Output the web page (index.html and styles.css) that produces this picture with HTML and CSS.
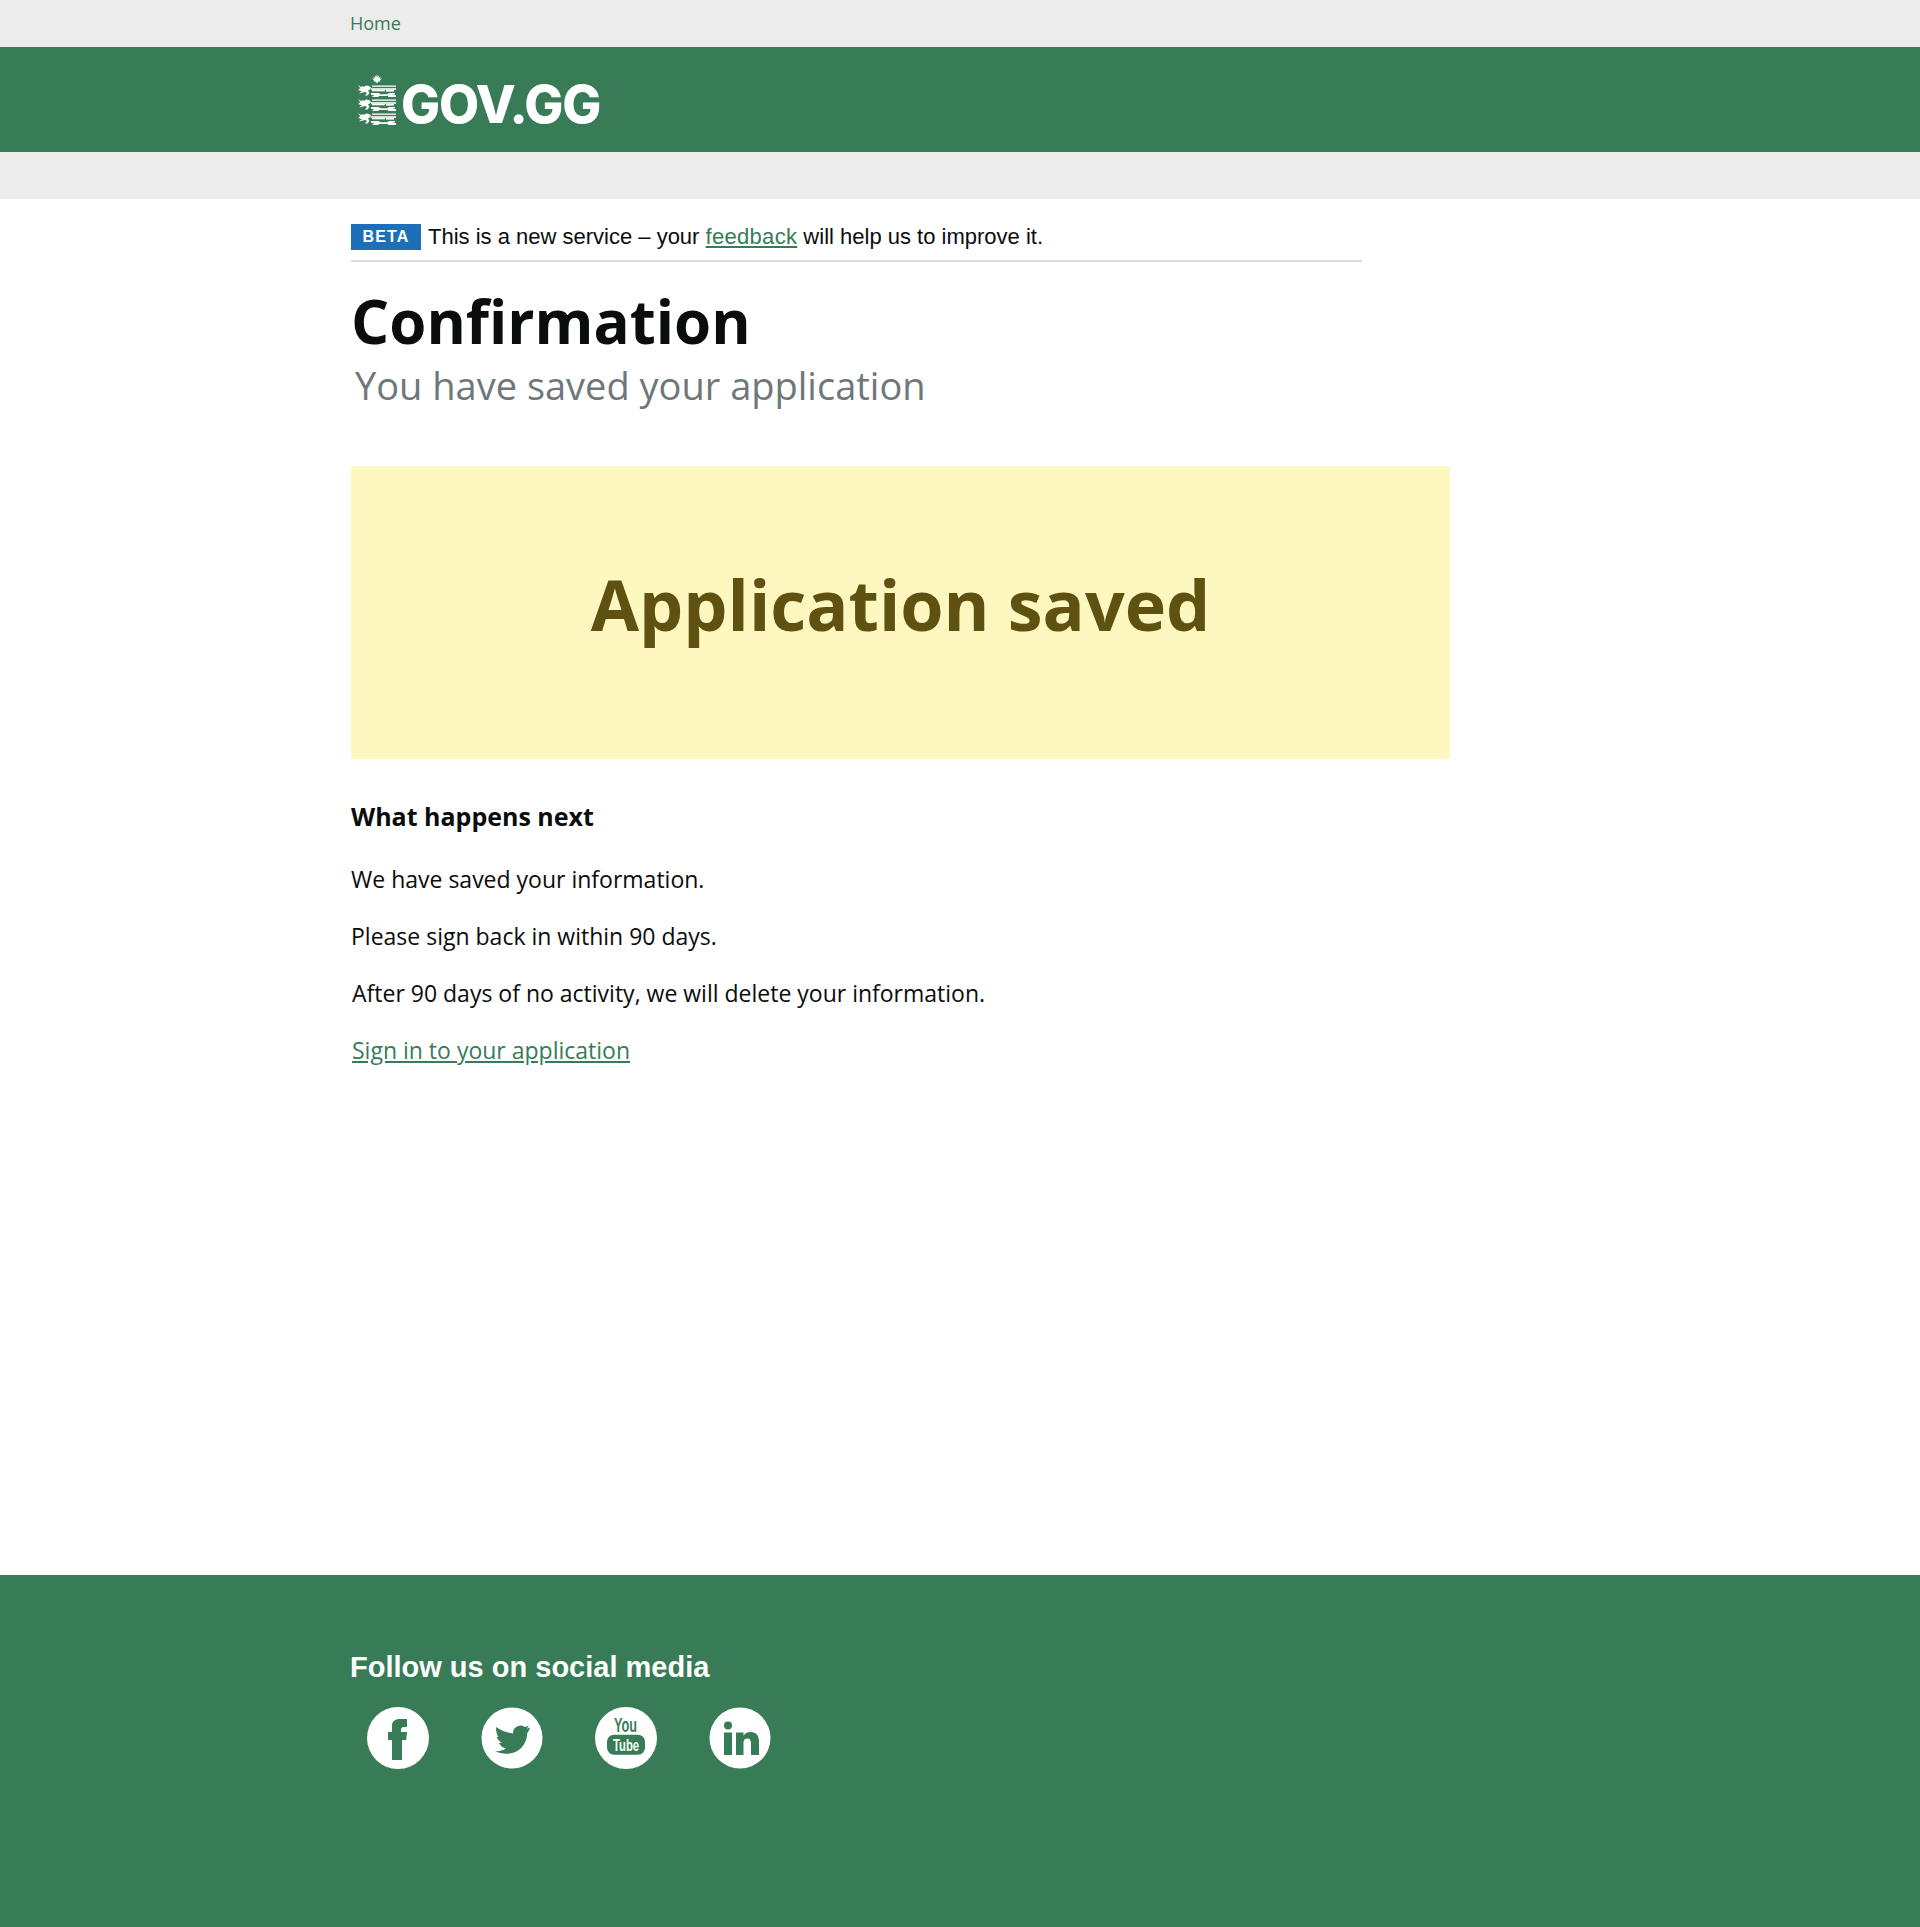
FILE: index.html
```html
<!DOCTYPE html>
<html lang="en">
<head>
<meta charset="utf-8">
<title>Confirmation - GOV.GG</title>
<link rel="stylesheet" href="styles.css">
</head>
<body>
<div class="topbar"><div class="wrap"><a class="home" href="#">Home</a></div></div>
<header class="masthead">
  <div class="wrap logo">
    <svg class="crest" width="40" height="54" viewBox="0 0 40 54" aria-hidden="true">
      <defs>
        <g id="lion">
          <path d="M1 0l3 2 2-1 1 1 2-1.500 3 .5 2 1.500-1 2-2 1 1.500 2.500-2 2.500H8l2-2.500-2-1-6 1.500 3-2.500L.5 6l3-.5L1 4l2.500-.5z"/>
          <rect x="15" y=".5" width="24" height="1.300"/>
          <rect x="14" y="3.200" width="25" height="1.600"/>
          <rect x="15" y="4.800" width="13" height="1.500"/>
          <path d="M14 8h8l1 1.200h7l2-1.200h6v1.200l-3 .8h4v2h-8v-1.500l-1 .5h-8l-1 1h-6l2-2h-3z"/>
          <rect x="29" y="5" width="8" height="1.600"/>
        </g>
      </defs>
      <g fill="#fff">
        <path d="M20 2l.7 3 1.500-2-.6 3 2.400-1.600-1.600 2.600 2.600-.7-2.500 2.400 1.500.3-3 .8-.5 1.200h-1l-.5-1.200-3-.8 1.500-.3-2.500-2.400 2.600.7-1.600-2.600 2.400 1.600-.6-3 1.500 2z"/>
        <use href="#lion" y="13"/>
        <use href="#lion" y="27"/>
        <use href="#lion" y="41"/>
      </g>
    </svg>
    <span class="logotext">GOV.GG</span>
  </div>
</header>
<div class="subbar"></div>
<main class="wrap content">
  <div class="phase"><strong class="tag">BETA</strong><span class="phase-text">This is a new service – your <a class="phase-link" href="#">feedback</a> will help us to improve it.</span></div>
  <h1 class="title">Confirmation</h1>
  <p class="subtitle">You have saved your application</p>
  <div class="panel"><h2 class="panel-title">Application saved</h2></div>
  <h3 class="next">What happens next</h3>
  <p class="para">We have saved your information.</p>
  <p class="para">Please sign back in within 90 days.</p>
  <p class="para para-in">After 90 days of no activity, we will delete your information.</p>
  <p class="para para-in"><a href="#">Sign in to your application</a></p>
</main>
<footer class="footer">
  <div class="wrap">
    <h4 class="follow">Follow us on social media</h4>
    <div class="social">
      <a href="#" class="soc" aria-label="Facebook"><svg width="62" height="62" viewBox="0 0 62 62"><circle cx="31" cy="31" r="31" fill="#fff"/><path class="ic" d="M25 53V33h-4v-8h4v-6c0-5 3-7 8-7h7v8h-3c-2 0-3 .8-3 3v2h6l-.8 8H35v20z"/></svg></a>
      <a href="#" class="soc" aria-label="Twitter"><svg width="62" height="62" viewBox="0 0 62 62"><circle cx="31" cy="31" r="30.500" fill="#fff"/><path class="ic" d="M49 20.500L45.500 21.700 48 18.500 44 20C42 18.300 39.500 18 37 19 33.500 20.500 31.800 23 32 26.500 26 25.500 20 23.500 15 20 15 24 15.500 27.500 17.500 30L15.500 30C17 33 18.500 34.500 21 35.500L18 36C19.500 39 22 41 25 41.500 22 43.500 18 44.500 14 44.300 20 47 27 47.500 33 45.500 41 42.500 46 35 46.300 26 47.500 24.500 48.500 22.500 49 20.500Z"/></svg></a>
      <a href="#" class="soc" aria-label="YouTube"><svg width="62" height="62" viewBox="0 0 62 62"><circle cx="31" cy="31" r="31" fill="#fff"/><text class="yt-you" x="30.500" y="25" text-anchor="middle" textLength="23" lengthAdjust="spacingAndGlyphs">You</text><rect x="12" y="27.700" width="38" height="20" rx="7" class="ic"/><text class="yt-tube" x="31" y="44" text-anchor="middle" textLength="26" lengthAdjust="spacingAndGlyphs">Tube</text></svg></a>
      <a href="#" class="soc" aria-label="LinkedIn"><svg width="62" height="62" viewBox="0 0 62 62"><circle cx="31" cy="31" r="30.500" fill="#fff"/><g class="ic"><circle cx="19" cy="18.500" r="4"/><rect x="15" y="25.500" width="8" height="22.500"/><path d="M27 25.500h7.500v3.200c1.200-2.200 3.700-3.800 7-3.800 6.400 0 8.500 4 8.500 10V48h-8V36.500c0-2.800-.8-5-3.700-5-3 0-3.800 2.200-3.800 5V48h-7.500z"/></g></svg></a>
    </div>
  </div>
</footer>
</body>
</html>
```
FILE: styles.css
```css
* { box-sizing: border-box; }
html, body { margin: 0; padding: 0; }
body {
  min-height: 1927px;
  display: flex;
  flex-direction: column;
  background: #fff;
  color: #0b0c0c;
  font-family: "Open Sans", sans-serif;
}
a { color: #387c57; }
.wrap { width: 1218px; margin-left: 351px; }
.topbar { height: 47px; background: #ececec; display: flex; align-items: center; }
.home { margin-left: -1px; font-size: 18px; line-height: 47px; text-decoration: none; }
.masthead { height: 105px; background: #387c57; }
.logo { display: flex; align-items: flex-start; height: 105px; padding: 25px 0 0 6px; }
.crest { flex: none; }
.logotext {
  margin: 9px 0 0 4px;
  color: #fff;
  font-family: Inter, sans-serif;
  font-weight: 800;
  font-size: 52px;
  line-height: 48px;
  letter-spacing: -1.200px;
}
.subbar { height: 47px; background: #ececec; }
.content { flex: 1 0 auto; }
.phase {
  width: 1011px;
  height: 63px;
  padding-top: 25px;
  border-bottom: 2px solid #dddddd;
  display: flex;
  align-items: flex-start;
  font-family: "Liberation Sans", sans-serif;
}
.tag {
  width: 70px;
  height: 26px;
  background: #1d70b8;
  color: #fff;
  font-size: 16px;
  line-height: 26px;
  letter-spacing: 1.200px;
  text-align: center;
}
.phase-text { margin-left: 7px; font-size: 22px; line-height: 26px; color: #0b0c0c; }
.phase-link { letter-spacing: .3px; }
.title {
  margin: 22px 0 0;
  font-size: 60px;
  line-height: 74px;
  font-weight: 700;
}
.subtitle {
  margin: 0 0 0 4px;
  font-size: 38px;
  line-height: 54px;
  color: #6f777b;
}
.panel {
  width: 1099px;
  height: 293px;
  margin-top: 54px;
  background: #fff7c0;
  display: flex;
  justify-content: center;
}
.panel-title {
  margin: 89px 0 0;
  font-size: 70px;
  line-height: 98px;
  font-weight: 700;
  color: #5f5211;
}
.next { margin: 39px 0 27px; font-size: 25px; line-height: 36px; font-weight: 700; }
.para { margin: 21px 0 0; font-size: 23px; line-height: 36px; color: #0b0c0c; }
.para-in { margin-left: 1px; }
.follow {
  margin: 0 0 0 -1px;
  padding-top: 74px;
  font-family: "Liberation Sans", sans-serif;
  font-size: 29px;
  line-height: 36px;
  font-weight: 700;
  color: #fff;
}
.footer { height: 352px; background: #387c57; flex: none; }
.social { display: flex; gap: 52px; margin: 22px 0 0 16px; }
.soc { display: block; width: 62px; height: 62px; }
.soc svg { display: block; }
.ic { fill: #387c57; }
.yt-you, .yt-tube { font-family: "Liberation Sans", sans-serif; font-weight: 700; }
.yt-you { font-size: 20px; fill: #387c57; }
.yt-tube { font-size: 17px; fill: #fff; }
```
